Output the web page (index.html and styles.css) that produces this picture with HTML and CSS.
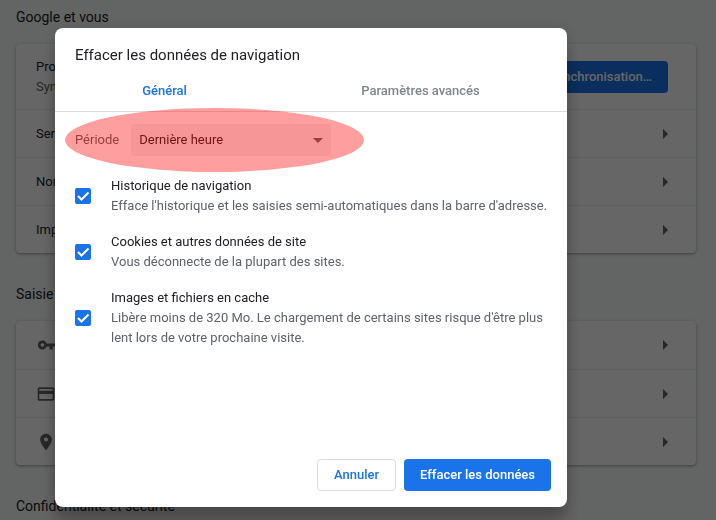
FILE: index.html
```
<!DOCTYPE html>
<html lang="fr">
<head>
    <meta charset="UTF-8">
    <meta name="viewport" content="width=device-width, initial-scale=1.0">
    <title>Paramètres</title>
    <link rel="stylesheet" href="styles.css">
</head>
<body>
    <main class="settings">
        <section>
            <h2>Google et vous</h2>
            <div class="card">
                <div class="row row-tall">
                    <div class="row-text">
                        <div>Profitez de Google</div>
                        <div class="secondary">Synchronisez vos appareils</div>
                    </div>
                    <button type="button" class="btn btn-primary">Activer la synchronisation…</button>
                </div>
                <a href="#" class="row"><span class="row-text">Services Google</span><span class="arrow"></span></a>
                <a href="#" class="row"><span class="row-text">Nom et photo</span><span class="arrow"></span></a>
                <a href="#" class="row"><span class="row-text">Importer les favoris</span><span class="arrow"></span></a>
            </div>
        </section>

        <section>
            <h2>Saisie automatique</h2>
            <div class="card">
                <a href="#" class="row">
                    <svg class="icon" viewBox="0 0 20 20"><path fill-rule="evenodd" d="M10.7 8.5A4.600 4.600 0 1 0 10.7 11.500H13.500V14.500H16.800V11.500H19V8.500ZM6.400 8.200A1.800 1.800 0 1 1 6.400 11.800A1.800 1.800 0 1 1 6.400 8.200Z"/></svg>
                    <span class="row-text">Mots de passe</span><span class="arrow"></span>
                </a>
                <a href="#" class="row">
                    <svg class="icon" viewBox="0 0 24 24"><path d="M20 4H4c-1.11 0-1.99.89-1.99 2L2 18c0 1.11.89 2 2 2h16c1.11 0 2-.89 2-2V6c0-1.11-.89-2-2-2zm0 14H4v-6h16v6zm0-10H4V6h16v2z"/></svg>
                    <span class="row-text">Modes de paiement</span><span class="arrow"></span>
                </a>
                <a href="#" class="row">
                    <svg class="icon" viewBox="0 0 24 24"><path d="M12 2C8.13 2 5 5.13 5 9c0 5.25 7 13 7 13s7-7.75 7-13c0-3.87-3.13-7-7-7zm0 9.5a2.5 2.5 0 0 1 0-5 2.5 2.5 0 0 1 0 5z"/></svg>
                    <span class="row-text">Adresses</span><span class="arrow"></span>
                </a>
            </div>
        </section>

        <section>
            <h2>Confidentialité et sécurité</h2>
        </section>
    </main>

    <div class="overlay">
        <form class="dialog" role="dialog" aria-labelledby="dialogTitle">
            <h1 id="dialogTitle">Effacer les données de navigation</h1>
            <div class="tabs" role="tablist">
                <button type="button" class="tab selected" role="tab">Général</button>
                <button type="button" class="tab" role="tab">Paramètres avancés</button>
            </div>

            <div class="dialog-body">
                <div class="period">
                    <label for="period">Période</label>
                    <select id="period">
                        <option>Dernière heure</option>
                    </select>
                    <span class="highlight"></span>
                </div>

                <label class="option">
                    <input type="checkbox" checked>
                    <span>
                        Historique de navigation
                        <span class="description">Efface l'historique et les saisies semi-automatiques dans la barre d'adresse.</span>
                    </span>
                </label>
                <label class="option">
                    <input type="checkbox" checked>
                    <span>
                        Cookies et autres données de site
                        <span class="description">Vous déconnecte de la plupart des sites.</span>
                    </span>
                </label>
                <label class="option">
                    <input type="checkbox" checked>
                    <span>
                        Images et fichiers en cache
                        <span class="description">Libère moins de 320 Mo. Le chargement de certains sites risque d'être plus lent lors de votre prochaine visite.</span>
                    </span>
                </label>
            </div>

            <div class="dialog-buttons">
                <button type="button" class="btn">Annuler</button>
                <button type="button" class="btn btn-primary">Effacer les données</button>
            </div>
        </form>
    </div>
</body>
</html>
```
FILE: styles.css
```
* {
    box-sizing: border-box;
}

body {
    margin: 0;
    height: 100vh;
    overflow: hidden;
    background: #f8f9fa;
    color: #202124;
    font-family: Roboto, "Liberation Sans", sans-serif;
    font-size: 13px;
    line-height: 20px;
}

button,
select {
    font: inherit;
}

/* Settings page */
.settings {
    padding: 7px 20px 0 16px;
}

h2 {
    margin: 0 0 17px;
    font-size: 14px;
    font-weight: 400;
    line-height: 20px;
}

.card {
    margin-bottom: 31px;
    background: #fff;
    border-radius: 4px;
    box-shadow: 0 1px 2px rgba(60, 64, 67, 0.3), 0 1px 3px 1px rgba(60, 64, 67, 0.15);
}

.row {
    display: flex;
    align-items: center;
    height: 48px;
    padding: 0 28px 0 20px;
    color: inherit;
    text-decoration: none;
}

.row + .row {
    border-top: 1px solid #e8eaed;
}

.row-tall {
    height: 65px;
}

.row-text {
    flex: 1;
}

.secondary {
    color: #5f6368;
}

.icon {
    width: 20px;
    height: 20px;
    margin-right: 20px;
    fill: #5f6368;
}

.arrow {
    border: 5px solid transparent;
    border-left-color: #5f6368;
    border-right-width: 0;
}

/* Buttons */
.btn {
    height: 32px;
    padding: 0 16px;
    border: 1px solid #dadce0;
    border-radius: 4px;
    background: #fff;
    color: #1a73e8;
    font-weight: 500;
    cursor: pointer;
}

.btn-primary {
    border: 0;
    background: #1a73e8;
    color: #fff;
}

/* Dialog */
.overlay {
    position: fixed;
    inset: 0;
    padding: 28px 55px 0;
    background: rgba(0, 0, 0, 0.6);
}

.dialog {
    max-width: 512px;
    padding-top: 15px;
    border-radius: 8px;
    background: #fff;
    box-shadow: 0 0 16px rgba(0, 0, 0, 0.12), 0 16px 16px rgba(0, 0, 0, 0.24);
}

h1 {
    margin: 0 0 4px;
    padding: 0 20px;
    font-size: 15px;
    font-weight: 400;
    line-height: 24px;
}

.tabs {
    display: flex;
    border-bottom: 1px solid #dadce0;
}

.tab {
    flex: 1;
    height: 40px;
    padding: 0 37px 0 0;
    border: 0;
    background: none;
    color: #80868b;
    font-weight: 500;
    cursor: pointer;
}

.tab.selected {
    color: #1a73e8;
}

.dialog-body {
    min-height: 347px;
    padding: 12px 16px 0 20px;
}

.period {
    position: relative;
    display: flex;
    align-items: center;
    gap: 12px;
    margin-bottom: 20px;
    color: #5f6368;
}

.period select {
    appearance: none;
    width: 200px;
    height: 32px;
    padding: 0 8px;
    border: 0;
    border-radius: 4px;
    background: #f1f3f4 url("data:image/svg+xml,%3Csvg xmlns='http://www.w3.org/2000/svg' width='10' height='5'%3E%3Cpath d='M0 0h10L5 5z' fill='%235f6368'/%3E%3C/svg%3E") no-repeat right 8px center;
    color: #202124;
}

/* red marker over the period choice */
.highlight {
    position: absolute;
    top: -16px;
    left: -10px;
    width: 299px;
    height: 64px;
    border-radius: 50%;
    background: rgba(255, 0, 0, 0.38);
    pointer-events: none;
}

.option {
    display: flex;
    align-items: center;
    gap: 20px;
    margin-bottom: 16px;
}

.option input {
    appearance: none;
    flex: none;
    width: 16px;
    height: 16px;
    margin: 0;
    border-radius: 2px;
    background: #fff;
    border: 2px solid #5f6368;
}

.option input:checked {
    border: 0;
    background: #1a73e8 url("data:image/svg+xml,%3Csvg xmlns='http://www.w3.org/2000/svg' viewBox='0 0 16 16'%3E%3Cpath d='M3 8l3.500 3.500L13.500 4.500' fill='none' stroke='%23fff' stroke-width='2'/%3E%3C/svg%3E");
}

.description {
    display: block;
    color: #5f6368;
}

.dialog-buttons {
    display: flex;
    justify-content: flex-end;
    gap: 8px;
    padding: 0 16px 16px;
}
```
